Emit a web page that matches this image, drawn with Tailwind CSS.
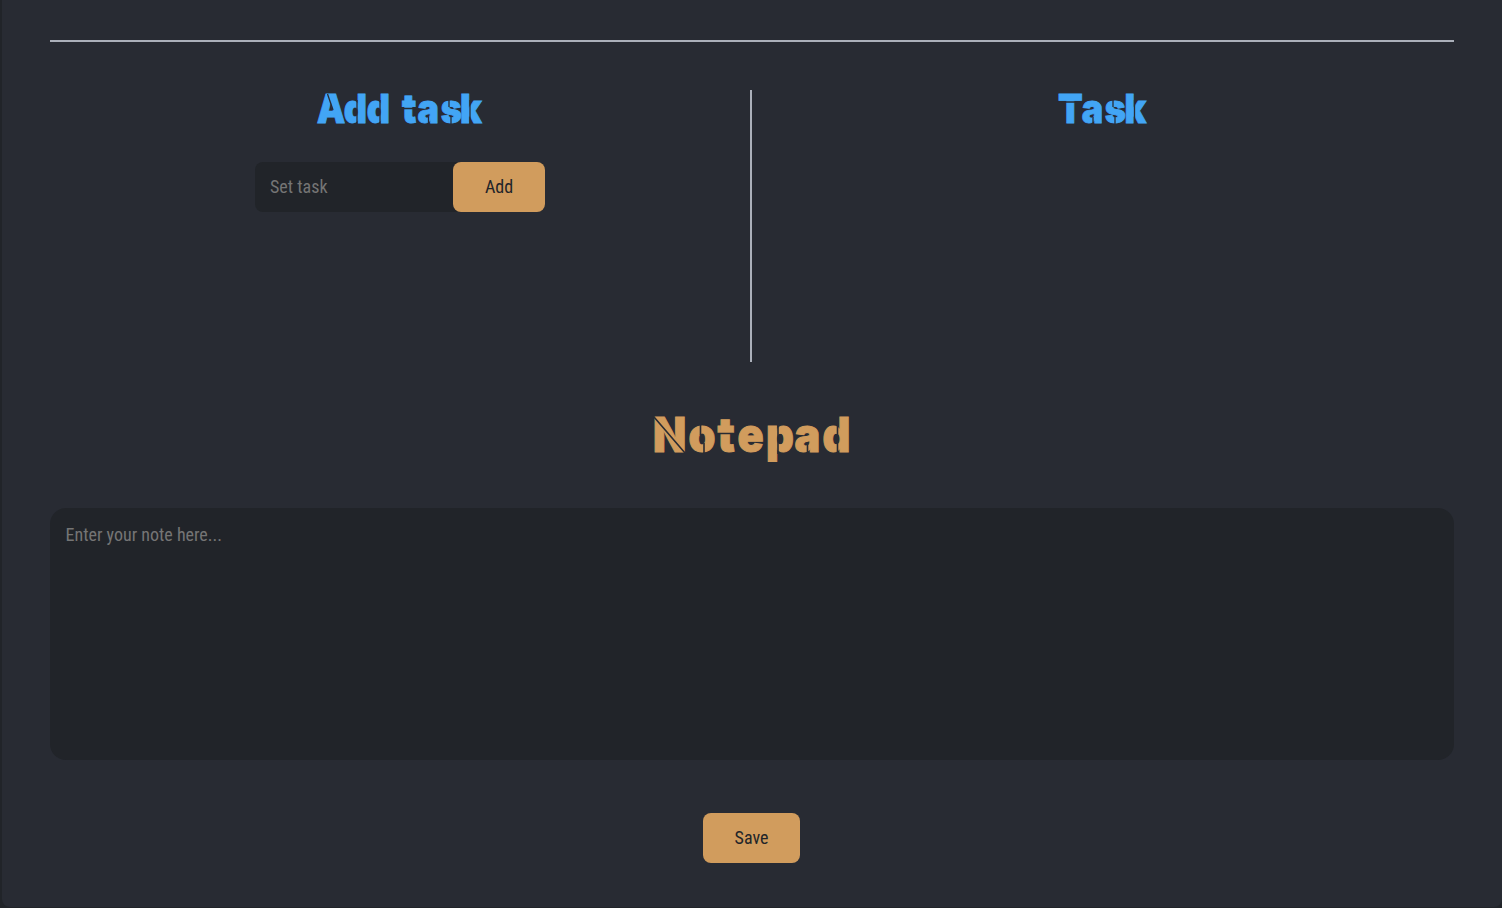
<!DOCTYPE html>
<html lang="en">
<head>
<meta charset="utf-8">
<title>Tasks and notepad</title>
<script src="https://cdn.jsdelivr.net/npm/@tailwindcss/browser@4"></script>
</head>
<body class="h-[908px] overflow-hidden bg-[#212429] font-['Roboto_Condensed',Roboto,sans-serif] text-lg [font-stretch:75%]">
<main class="ml-0.5 flex h-[907px] w-[1500px] flex-col items-center rounded-b-lg bg-[#282b33] pl-12 pr-12 pt-10">
  <hr class="h-0.5 w-full shrink-0 border-0 bg-[#abb0ba]">
  <div class="mt-12 flex h-[272px] w-full shrink-0">
    <section class="flex w-[700px] flex-col items-center">
      <h2>
        <svg class="block h-12 w-[172px] overflow-visible fill-[#42a5f5] font-['Inter',sans-serif] text-[40px] font-black [font-stretch:100%]">
          <text class="stroke-[#42a5f5] stroke-[0.8]" transform="scale(.9 1)" x="3 33.2 58.7 85 97.8 115 140.8 162.2" y="33">Add task</text>
          <!-- stencil cuts -->
          <path class="fill-none stroke-[#282b33] stroke-[1.3]" d="M13.5 4L19 20M43 10V34M66 10V34M86 18.5H102M114.5 27V34M135 10V17M137 26V34M156 10V34"/>
        </svg>
      </h2>
      <form class="mt-6 flex h-[50px] w-[290px] rounded-lg bg-[#212429]">
        <input class="w-[198px] bg-transparent px-[15px] text-[#ced4da] outline-none placeholder:text-[#757575]" placeholder="Set task">
        <button type="button" class="w-[92px] rounded-lg bg-[#d19c5d] text-[#212429]">Add</button>
      </form>
    </section>
    <div class="w-0.5 bg-[#abb0ba]"></div>
    <section class="flex flex-1 flex-col items-center">
      <h2>
        <svg class="block h-12 w-[94px] overflow-visible fill-[#42a5f5] font-['Inter',sans-serif] text-[40px] font-black [font-stretch:100%]">
          <text class="stroke-[#42a5f5] stroke-[0.8]" transform="scale(.9 1)" x="2.2 28.5 54.3 76" y="33">Task</text>
          <path class="fill-none stroke-[#282b33] stroke-[1.3]" d="M2 12H26M37 27V34M57 10V17M59 26V34M78.5 10V34"/>
        </svg>
      </h2>
    </section>
  </div>
  <h1 class="mt-12">
    <svg class="block h-[60px] w-[202px] overflow-visible fill-[#d19c5d] font-['Inter',sans-serif] text-[48px] font-black [font-stretch:100%]">
      <text class="stroke-[#d19c5d] stroke-1" transform="scale(.9 1)" x="2.2 41.7 74 96.2 127.8 159.5 190.5" y="41.7">Notepad</text>
      <path class="fill-none stroke-[#282b33] stroke-[1.6]" d="M3 7L34 43M49.5 13V25M53 33V43.5M65 23.5H88M127 14V44M156.5 34V44M186.5 13V44"/>
    </svg>
  </h1>
  <textarea class="mt-[38px] h-[252px] w-full shrink-0 resize-none rounded-2xl bg-[#212429] px-[15.5px] py-[13px] text-[#ced4da] outline-none placeholder:text-[#757575]" placeholder="Enter your note here..."></textarea>
  <button type="button" class="mr-0.5 mt-[53px] h-[50px] w-[97px] shrink-0 rounded-lg bg-[#d19c5d] pl-px text-[#212429]">Save</button>
</main>
</body>
</html>
